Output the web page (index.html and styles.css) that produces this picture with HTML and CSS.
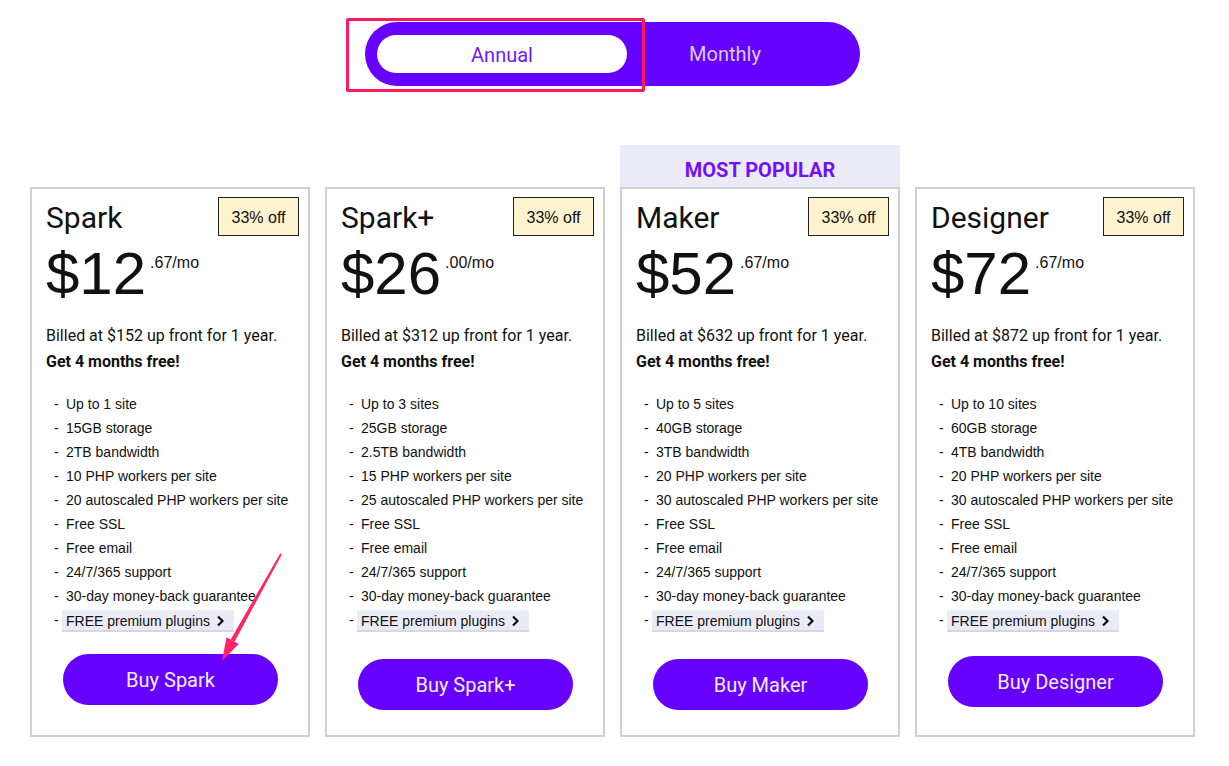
FILE: index.html
```html
<!doctype html>
<html lang="en">
    <head>
        <meta charset="UTF-8" />
        <meta name="viewport" content="width=device-width, initial-scale=1.0" />
        <title>Pricing</title>
        <link rel="stylesheet" href="styles.css">
    </head>
    <body>
        <div class="page">
            <div class="toggleRow">
                <div class="toggle">
                    <span class="annotateBox"></span>
                    <button class="toggleOption active">Annual</button>
                    <button class="toggleOption">Monthly</button>
                </div>
            </div>

            <div class="plans">
                <div class="plan">
                    <div class="flag"></div>
                    <div class="card">
                        <div class="cardHead">
                            <h3>Spark</h3>
                            <span class="badge">33% off</span>
                        </div>
                        <div class="price"><span class="amount">$12</span><span class="cents">.67/mo</span></div>
                        <p class="billed">Billed at $152 up front for 1 year.</p>
                        <p class="free">Get 4 months free!</p>
                        <ul class="features">
                            <li>Up to 1 site</li>
                            <li>15GB storage</li>
                            <li>2TB bandwidth</li>
                            <li>10 PHP workers per site</li>
                            <li>20 autoscaled PHP workers per site</li>
                            <li>Free SSL</li>
                            <li>Free email</li>
                            <li>24/7/365 support</li>
                            <li>30-day money-back guarantee</li>
                            <li><span class="chip">FREE premium plugins <svg width="9" height="12" viewBox="0 0 9 12"><path d="M2 1.5 L6.5 6 L2 10.5" fill="none" stroke="#111" stroke-width="2.2"/></svg></span></li>
                        </ul>
                        <a class="buy">Buy Spark</a>
                    </div>
                </div>

                <div class="plan">
                    <div class="flag"></div>
                    <div class="card">
                        <div class="cardHead">
                            <h3>Spark+</h3>
                            <span class="badge">33% off</span>
                        </div>
                        <div class="price"><span class="amount">$26</span><span class="cents">.00/mo</span></div>
                        <p class="billed">Billed at $312 up front for 1 year.</p>
                        <p class="free">Get 4 months free!</p>
                        <ul class="features">
                            <li>Up to 3 sites</li>
                            <li>25GB storage</li>
                            <li>2.5TB bandwidth</li>
                            <li>15 PHP workers per site</li>
                            <li>25 autoscaled PHP workers per site</li>
                            <li>Free SSL</li>
                            <li>Free email</li>
                            <li>24/7/365 support</li>
                            <li>30-day money-back guarantee</li>
                            <li><span class="chip">FREE premium plugins <svg width="9" height="12" viewBox="0 0 9 12"><path d="M2 1.5 L6.5 6 L2 10.5" fill="none" stroke="#111" stroke-width="2.2"/></svg></span></li>
                        </ul>
                        <a class="buy lower">Buy Spark+</a>
                    </div>
                </div>

                <div class="plan">
                    <div class="flag popular">MOST POPULAR</div>
                    <div class="card">
                        <div class="cardHead">
                            <h3>Maker</h3>
                            <span class="badge">33% off</span>
                        </div>
                        <div class="price"><span class="amount">$52</span><span class="cents">.67/mo</span></div>
                        <p class="billed">Billed at $632 up front for 1 year.</p>
                        <p class="free">Get 4 months free!</p>
                        <ul class="features">
                            <li>Up to 5 sites</li>
                            <li>40GB storage</li>
                            <li>3TB bandwidth</li>
                            <li>20 PHP workers per site</li>
                            <li>30 autoscaled PHP workers per site</li>
                            <li>Free SSL</li>
                            <li>Free email</li>
                            <li>24/7/365 support</li>
                            <li>30-day money-back guarantee</li>
                            <li><span class="chip">FREE premium plugins <svg width="9" height="12" viewBox="0 0 9 12"><path d="M2 1.5 L6.5 6 L2 10.5" fill="none" stroke="#111" stroke-width="2.2"/></svg></span></li>
                        </ul>
                        <a class="buy lower">Buy Maker</a>
                    </div>
                </div>

                <div class="plan">
                    <div class="flag"></div>
                    <div class="card">
                        <div class="cardHead">
                            <h3>Designer</h3>
                            <span class="badge">33% off</span>
                        </div>
                        <div class="price"><span class="amount">$72</span><span class="cents">.67/mo</span></div>
                        <p class="billed">Billed at $872 up front for 1 year.</p>
                        <p class="free">Get 4 months free!</p>
                        <ul class="features">
                            <li>Up to 10 sites</li>
                            <li>60GB storage</li>
                            <li>4TB bandwidth</li>
                            <li>20 PHP workers per site</li>
                            <li>30 autoscaled PHP workers per site</li>
                            <li>Free SSL</li>
                            <li>Free email</li>
                            <li>24/7/365 support</li>
                            <li>30-day money-back guarantee</li>
                            <li><span class="chip">FREE premium plugins <svg width="9" height="12" viewBox="0 0 9 12"><path d="M2 1.5 L6.5 6 L2 10.5" fill="none" stroke="#111" stroke-width="2.2"/></svg></span></li>
                        </ul>
                        <a class="buy mid">Buy Designer</a>
                    </div>
                </div>
            </div>
        </div>

        <!-- screenshot annotation arrow -->
        <svg class="annotateArrow" width="1229" height="766" viewBox="0 0 1229 766">
            <polygon points="280.2,553.5 281.8,554.5 234.5,641.8 230.7,639.6" fill="#ff2463"/>
            <polygon points="222,661 226.5,637.3 238.7,644.1" fill="#ff2463"/>
        </svg>
    </body>
</html>
```

FILE: styles.css
```css
body {
    margin: 0;
    background: #fff;
    color: #111;
    font-family: Roboto, "Liberation Sans", Arial, sans-serif;
}
.page {
    width: 1165px;
    margin-left: 30px;
    padding-top: 22px;
}
.toggleRow {
    display: flex;
    justify-content: center;
}
.toggle {
    position: relative;
    display: flex;
    align-items: center;
    background: #6600ff;
    border-radius: 32px;
    height: 64px;
    padding: 0 37px 0 12px;
    box-sizing: border-box;
}
.toggleOption {
    border: none;
    background: none;
    font-family: inherit;
    font-size: 20px;
    color: #d6cdf0;
    width: 196px;
    height: 38px;
    padding: 0;
}
.toggleOption.active {
    width: 250px;
    padding-top: 2px;
    background: #fff;
    color: #7216ff;
    border-radius: 19px;
}
.annotateBox {
    position: absolute;
    left: -19px;
    top: -4px;
    width: 299px;
    height: 74px;
    border: 3px solid #ff1a5c;
    box-sizing: border-box;
    border-radius: 2px;
}
.plans {
    display: flex;
    gap: 15px;
    margin-top: 59px;
}
.plan {
    width: 280px;
    display: flex;
    flex-direction: column;
}
.flag {
    height: 42px;
}
.flag.popular {
    background: #ebebf9;
    color: #7010ff;
    font-weight: bold;
    font-size: 20px;
    text-align: center;
    line-height: 20px;
    padding-top: 15px;
    box-sizing: border-box;
}
.card {
    height: 550px;
    border: 2px solid #cfcfcf;
    box-sizing: border-box;
    padding: 0 9px 0 14px;
}
.cardHead {
    display: flex;
    justify-content: space-between;
    align-items: flex-start;
    height: 47px;
    padding-top: 8px;
    box-sizing: border-box;
}
.cardHead h3 {
    margin: 3px 0 0;
    font-size: 30px;
    font-weight: normal;
    line-height: 36px;
}
.badge {
    width: 81px;
    height: 39px;
    box-sizing: border-box;
    border: 1px solid #222;
    background: #fdf3cf;
    font-family: "Liberation Sans", Arial, sans-serif;
    font-size: 16px;
    padding-top: 2px;
    display: flex;
    align-items: center;
    justify-content: center;
}
.price {
    display: flex;
    align-items: flex-start;
    margin-top: 8px;
    font-family: "Liberation Sans", Arial, sans-serif;
}
.amount {
    font-size: 60px;
    line-height: 60px;
}
.cents {
    font-size: 16px;
    line-height: 16px;
    margin: 11px 0 0 4px;
}
.billed,
.free {
    margin: 22px 0 0;
    font-size: 16px;
    line-height: 20px;
}
.free {
    margin-top: 6px;
    font-weight: bold;
}
.features {
    list-style: none;
    margin: 20px 0 0;
    padding: 0 0 0 8px;
    font-family: "Liberation Sans", Arial, sans-serif;
    font-size: 14px;
    line-height: 24px;
}
.features li::before {
    content: "-";
    display: inline-block;
    width: 12px;
}
.chip {
    display: inline-flex;
    align-items: center;
    gap: 6px;
    height: 22px;
    margin-left: -4px;
    padding: 0 9px 0 4px;
    background: #ebebf8;
    border-top: 1px solid #f0f0fa;
    border-bottom: 2px solid #d6d6e4;
    box-sizing: border-box;
    vertical-align: middle;
}
.buy {
    display: flex;
    align-items: center;
    justify-content: center;
    width: 215px;
    height: 51px;
    margin: 22px auto 0;
    background: #6600ff;
    color: #f2edff;
    border-radius: 26px;
    font-size: 20px;
    position: relative;
    left: -2px;
}
.buy.lower {
    margin-top: 27px;
}
.buy.mid {
    margin-top: 24px;
}
.annotateArrow {
    position: absolute;
    left: 0;
    top: 0;
    pointer-events: none;
}
```
